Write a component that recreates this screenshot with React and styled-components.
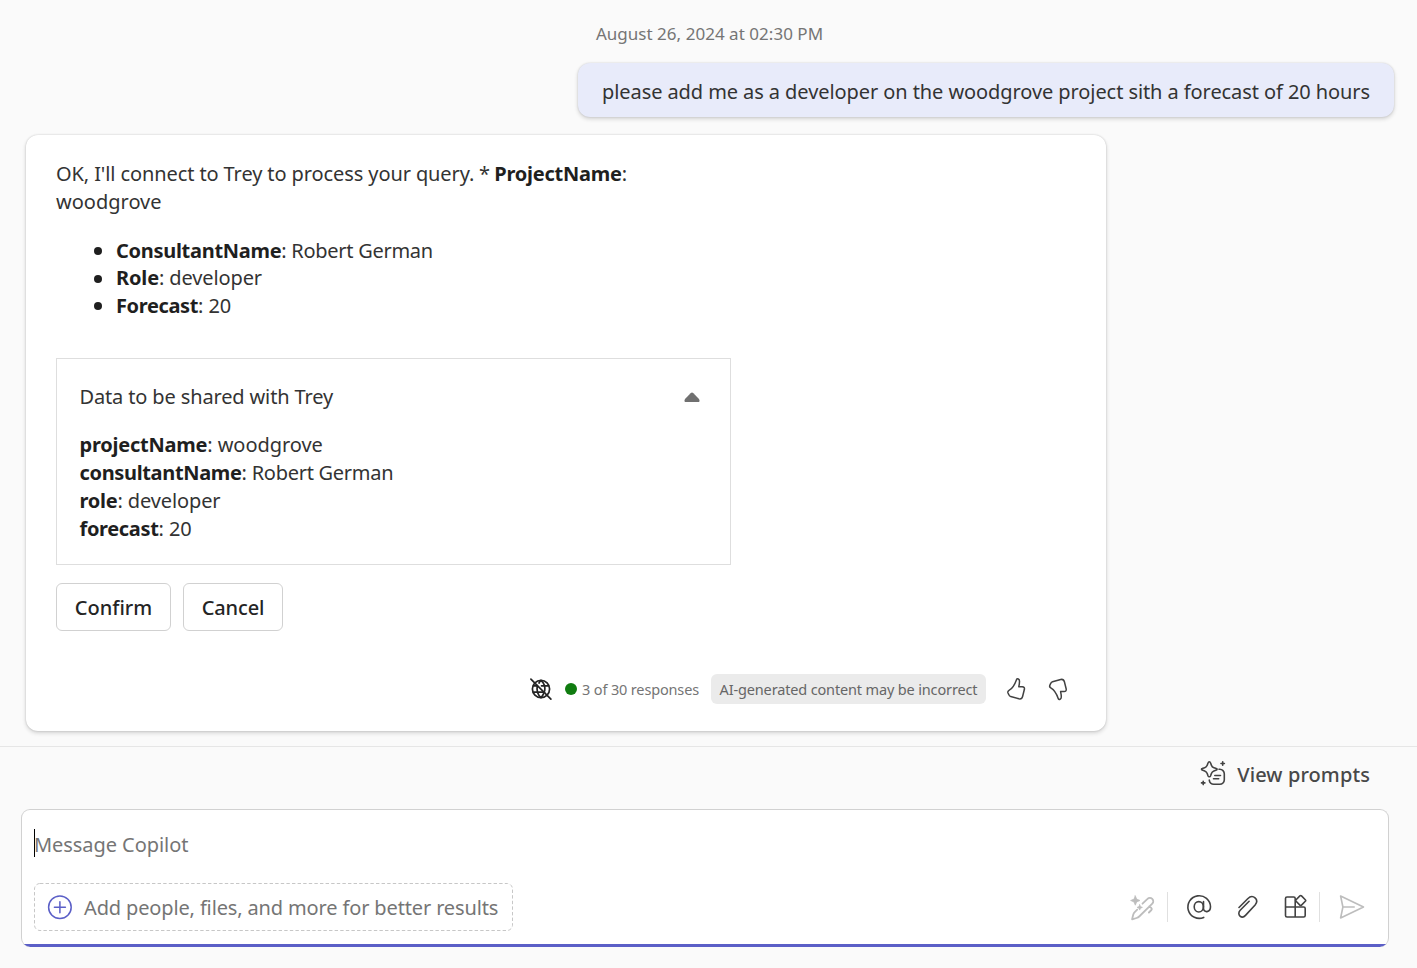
import React from "react";
import styled, { createGlobalStyle } from "styled-components";

const GlobalStyle = createGlobalStyle`
  * { box-sizing: border-box; }
  body { margin: 0; background: #fafafa; }
  button { font: inherit; color: inherit; }
`;

const Page = styled.main`
  display: flex;
  flex-direction: column;
  height: 968px;
  overflow: hidden;
  background: #fafafa;
  color: #333;
  font-family: "Noto Sans", "Open Sans", sans-serif;
  font-size: 20px;
  line-height: 28px;
`;

const Text = styled.span`
  white-space: pre;
  letter-spacing: ${(p) => p.$ls || 0}px;
`;

const Strong = styled.strong`
  font-weight: 700;
  color: #1f1f1f;
  letter-spacing: ${(p) => p.$ls ?? -0.25}px;
`;

const Thread = styled.section`
  display: flex;
  flex-direction: column;
  height: 747px;
  padding: 20px 23px 0 26px;
  border-bottom: 1px solid #e6e6e6;
`;

const Timestamp = styled.time`
  align-self: center;
  margin-right: 1px;
  height: 28px;
  font-size: 17px;
  letter-spacing: 0.03px;
  color: #757575;
`;

const UserBubble = styled.div`
  align-self: flex-end;
  width: 816px;
  height: 54px;
  margin-top: 15px;
  padding: 15px 0 0 24px;
  border-radius: 12px;
  background: #e8ebfa;
  box-shadow: 0 0 2px rgba(0, 0, 0, 0.14), 0 2px 4px rgba(0, 0, 0, 0.16);
`;

const ReplyCard = styled.article`
  display: flex;
  flex-direction: column;
  width: 1080px;
  height: 596px;
  margin-top: 18px;
  padding: 25px 36px 0 30px;
  border-radius: 12px;
  background: #fff;
  box-shadow: 0 0 2px rgba(0, 0, 0, 0.18), 0 2px 4px rgba(0, 0, 0, 0.16);
`;

const Paragraph = styled.p`
  margin: 0;
  width: 620px;
`;

const BulletList = styled.ul`
  margin: 20.8px 0 0;
  padding: 0 0 0 38px;
  list-style: none;
  line-height: 27.5px;
`;

const BulletItem = styled.li`
  display: flex;
  align-items: center;
  &::before {
    content: "";
    width: 8px;
    height: 8px;
    margin: 1px 14px 0 0;
    border-radius: 50%;
    background: #1f1f1f;
  }
`;

const SharedPanel = styled.section`
  width: 675px;
  height: 207px;
  margin-top: 38.7px;
  padding: 24px 29px 0 22.5px;
  border: 1px solid #dedede;
`;

const PanelHeader = styled.header`
  display: flex;
  align-items: center;
  justify-content: space-between;
  height: 28px;
  margin-bottom: 20px;
`;

const Actions = styled.div`
  display: flex;
  gap: 12px;
  margin-top: 18px;
`;

const ActionButton = styled.button`
  width: ${(p) => p.$width}px;
  height: 48px;
  padding: 3px 0 0;
  border: 1px solid #d1d1d1;
  border-radius: 6px;
  background: #fff;
  color: #242424;
  font-weight: 550;
  letter-spacing: ${(p) => p.$ls}px;
`;

const CardFooter = styled.footer`
  display: flex;
  align-items: center;
  justify-content: flex-end;
  height: 30px;
  margin-top: 43px;
  font-size: 14.5px;
  letter-spacing: -0.15px;
  color: #757575;
`;

const StatusDot = styled.i`
  width: 12px;
  height: 12px;
  margin: 0 5px 0 12px;
  border-radius: 50%;
  background: #107c10;
`;

const Chip = styled.span`
  display: flex;
  align-items: center;
  justify-content: center;
  width: 275px;
  height: 30px;
  margin: 0 18px 0 12px;
  border-radius: 6px;
  background: #ebebeb;
  color: #666;
`;

const Feedback = styled.div`
  display: flex;
  gap: 18px;
  width: 66px;
`;

const Icon = styled.svg`
  display: block;
  flex: none;
  fill: none;
  stroke: ${(p) => p.$color || "#424242"};
  stroke-width: ${(p) => p.$stroke || 1.5};
  stroke-linecap: round;
  stroke-linejoin: round;
`;

const PromptsBar = styled.div`
  display: flex;
  align-items: center;
  justify-content: flex-end;
  gap: 9px;
  height: 54px;
  padding-right: 47px;
  color: #484848;
  font-weight: 550;
`;

const PromptsLabel = styled(Text)`
  padding-top: 2px;
`;

const Composer = styled.section`
  width: 1368px;
  height: 138px;
  margin: 8px 0 0 21px;
  padding: 19px 20px 0 12px;
  border: 1px solid #d1d1d1;
  border-bottom: 0;
  border-radius: 9px;
  background: linear-gradient(#5b5fc7, #5b5fc7) bottom / 100% 3px no-repeat border-box, #fff;
`;

const MessageField = styled.div`
  display: flex;
  height: 30px;
  color: #757575;
`;

const Caret = styled.i`
  width: 1px;
  height: 28px;
  margin-right: -1px;
  background: #000;
`;

const Placeholder = styled(Text)`
  padding-top: 2px;
  letter-spacing: -0.06px;
`;

const ComposerRow = styled.div`
  display: flex;
  align-items: center;
  justify-content: space-between;
  height: 48px;
  margin-top: 24px;
`;

const AddContext = styled.button`
  display: flex;
  align-items: center;
  gap: 11px;
  width: 479px;
  height: 48px;
  padding: 0 0 0 12px;
  border: 0;
  background: none;
  color: #757575;
`;

const AddLabel = styled(Text)`
  padding-top: 2px;
`;

const DashedFrame = styled.div`
  position: relative;
`;

const DashedOutline = styled.svg`
  position: absolute;
  inset: 0;
  pointer-events: none;
  fill: none;
  stroke: #c7c7c7;
  stroke-dasharray: 3.4 2.2;
`;

const Tools = styled.div`
  display: flex;
  align-items: center;
  padding-top: 1px;
`;

const Separator = styled.i`
  width: 1px;
  height: 30px;
  margin: -1px ${(p) => p.$right}px 0 ${(p) => p.$left}px;
  background: #e0e0e0;
`;

const Spacer = styled.i`
  width: ${(p) => p.$width}px;
`;

const thumbPath =
  "M12.6 2.4c.6-1.2 2.9-.4 2.9 1.8 0 1.9-.3 3.7-.7 5.5h3.5c1.7 0 2.4 1.2 2.1 2.6l-1.8 7.2c-.5 1.9-1.9 2.7-3.7 2.3l-8.2-2.3c-1-.3-1.6-.9-1.9-1.9l-.8-1.600c-.5-1.300.2-2.300 1.300-2.900 3-1.600 5.800-6.500 7.300-10.700z";

function Caption({ name, value, ls, vls }) {
  return (
    <Text>
      <Strong $ls={ls}>{name}</Strong>
      <Text $ls={vls}>: {value}</Text>
    </Text>
  );
}

const bullets = [
  { name: "ConsultantName", value: "Robert German", ls: -0.29, vls: -0.28 },
  { name: "Role", value: "developer", ls: -0.13, vls: -0.12 },
  { name: "Forecast", value: "20", ls: -0.37, vls: -0.11 },
];

const shared = [
  { name: "projectName", value: "woodgrove", ls: -0.23, vls: -0.05 },
  { name: "consultantName", value: "Robert German", ls: -0.34, vls: -0.27 },
  { name: "role", value: "developer", ls: -0.24, vls: -0.12 },
  { name: "forecast", value: "20", ls: -0.34, vls: -0.11 },
];

export default function App() {
  return (
    <Page>
      <GlobalStyle />
      <Thread>
        <Timestamp>August 26, 2024 at 02:30 PM</Timestamp>
        <UserBubble>
          <Text $ls={-0.08}>
            please add me as a developer on the woodgrove project sith a forecast of 20 hours
          </Text>
        </UserBubble>
        <ReplyCard>
          <Paragraph>
            <Text $ls={-0.1}>{"OK, I'll connect to Trey to process your query."}</Text>
            <Text $ls={-0.45}>{" * "}</Text>
            <Strong>ProjectName</Strong>:
            <br />
            woodgrove
          </Paragraph>
          <BulletList>
            {bullets.map((b) => (
              <BulletItem key={b.name}>
                <Caption {...b} />
              </BulletItem>
            ))}
          </BulletList>
          <SharedPanel>
            <PanelHeader>
              <Text $ls={-0.14}>Data to be shared with Trey</Text>
              <Icon width="18" height="14" viewBox="0 0 18 14">
                <path
                  d="M7.6 3.2q1.4-1.3 2.8 0l5.6 5.7q1.500 2.900-1 3.200H3q-2.500-.3-1-3.200z"
                  fill="#707070"
                  stroke="none"
                />
              </Icon>
            </PanelHeader>
            {shared.map((s) => (
              <div key={s.name}>
                <Caption {...s} />
              </div>
            ))}
          </SharedPanel>
          <Actions>
            <ActionButton $width={115} $ls={-0.02}>Confirm</ActionButton>
            <ActionButton $width={100} $ls={-0.12}>Cancel</ActionButton>
          </Actions>
          <CardFooter>
            <Icon width="24" height="24" viewBox="0 0 24 24" $color="#242424" $stroke={1.7}>
              <circle cx="12" cy="12" r="8.6" />
              <path d="M4.5 8.800H8M12.5 8.800h7M4.5 15.200h11M8.300 8.500c-.7 4 .2 9 3.700 12.100 1.200-1.200 2-2.500 2.600-4M10 6c.5-1 1.200-1.900 2-2.600 3 2.500 4.200 7 3.700 10.500" />
              <path d="M1.9 2.1l20 20" />
            </Icon>
            <StatusDot />
            <span>3 of 30 responses</span>
            <Chip>AI-generated content may be incorrect</Chip>
            <Feedback>
              <Icon width="24" height="24" viewBox="0 0 24 24">
                <path d={thumbPath} />
              </Icon>
              <Icon width="24" height="24" viewBox="0 0 24 24">
                <path d={thumbPath} transform="matrix(1 0 0 -1 -.2 24.3)" />
              </Icon>
            </Feedback>
          </CardFooter>
        </ReplyCard>
      </Thread>
      <PromptsBar>
        <Icon width="28" height="28" viewBox="0 0 28 28" $stroke={1.6}>
          <path d="M9.3 1.7c.7 0 1 .4 1.200 1l.9 2.500q.7 1.900 2.500 2.500l2.500.9c.9.300.9 1.200 0 1.500l-2.500.9q-1.800.7-2.500 2.500l-.9 2.500c-.4 1-2 1-2.400 0l-.9-2.500q-.7-1.800-2.500-2.500l-2.500-.9c-.9-.3-.9-1.200 0-1.500l2.500-.9q1.800-.6 2.500-2.500l.9-2.500c.2-.6.5-1 1.200-1z" />
          <path d="M19 9.3h.8a4.500 4.500 0 0 1 4.500 4.500v6a4.500 4.500 0 0 1-4.500 4.500h-6a4.500 4.500 0 0 1-4.500-4.200M14.8 15.500h5.700M13.500 18.700h5.200M22.700 1.800v3.400M21 3.500h3.400M3.200 21.200v3.400M1.500 22.900h3.400" />
        </Icon>
        <PromptsLabel $ls={0.1}>View prompts</PromptsLabel>
      </PromptsBar>
      <Composer>
        <MessageField>
          <Caret />
          <Placeholder>Message Copilot</Placeholder>
        </MessageField>
        <ComposerRow>
          <DashedFrame>
            <DashedOutline width="479" height="48">
              <rect x=".5" y=".5" width="478" height="47" rx="5.5" />
            </DashedOutline>
            <AddContext>
              <Icon width="27" height="27" viewBox="0 0 27 27" $color="#5b5fc7" $stroke={1.5}>
                <circle cx="13.9" cy="13.2" r="11.3" />
                <path d="M13.9 7.700v11M8.400 13.200h11" />
              </Icon>
              <AddLabel $ls={-0.14}>Add people, files, and more for better results</AddLabel>
            </AddContext>
          </DashedFrame>
          <Tools>
            <Icon width="28" height="28" viewBox="0 0 28 28" $color="#bdbdbd" $stroke={1.8}>
              <path
                d="M7.300 1.800l1.400 3.300L12 6.500 8.700 7.900 7.300 11.200 5.900 7.900 2.600 6.500 5.900 5.100zM11.700 10.700l.8 1.900 1.900.8-1.900.8-.8 1.900-.8-1.900-1.900-.8 1.900-.8z"
                fill="#bdbdbd"
                strokeWidth=".7"
              />
              <path d="M14.500 9.700l5-4.800a3.300 3.300 0 0 1 4.800 4.700L11.200 22.500c-.8.8-1.500 1.200-2.600 1.500l-4.500 1.300 1.100-4.600c.3-1 .7-1.800 1.500-2.600l2.500-2.500M21.400 12.200l2 2c.6.600.6 1.200 0 1.800l-2.500 2.500" />
            </Icon>
            <Separator $left={11} $right={18} />
            <Icon width="28" height="28" viewBox="0 0 28 28" $stroke={1.6}>
              <ellipse cx="12.8" cy="12.8" rx="4.6" ry="5.2" />
              <path d="M17.500 7.500v7.100c0 4.300 7 4.300 7-1.800A11.300 11.300 0 1 0 17.700 23.400" />
            </Icon>
            <Spacer $width={22} />
            <Icon width="28" height="28" viewBox="0 0 28 28" $stroke={1.6}>
              <path d="M3 13.500l8.700-8.800c5.300-5.200 11.800.8 7.400 6.300L9.500 21.400c-3.600 4-9.300-.6-5.300-5.100l8.900-9" />
            </Icon>
            <Spacer $width={19} />
            <Icon width="28" height="28" viewBox="0 0 28 28" $stroke={1.6}>
              <path d="M12.200 13V4.500q0-1.500-1.500-1.500H4Q2.500 3 2.500 4.500v17Q2.500 23 4 23h16.700q1.500 0 1.500-1.500v-7q0-1.500-1.500-1.500zM2.500 13h9.700v10" />
              <path d="M16.900 1.900q.8-.8 1.600 0l3.800 3.800q.8.8 0 1.600l-3.800 3.800q-.8.8-1.600 0l-3.800-3.800q-.8-.8 0-1.600z" />
            </Icon>
            <Separator $left={8} $right={18} />
            <Icon width="30" height="28" viewBox="0 0 30 28" $color="#bdbdbd" $stroke={1.6}>
              <path d="M2.600 2L25.500 13 2.600 24 4.900 13zM4.900 13h11.300" />
            </Icon>
          </Tools>
        </ComposerRow>
      </Composer>
    </Page>
  );
}
